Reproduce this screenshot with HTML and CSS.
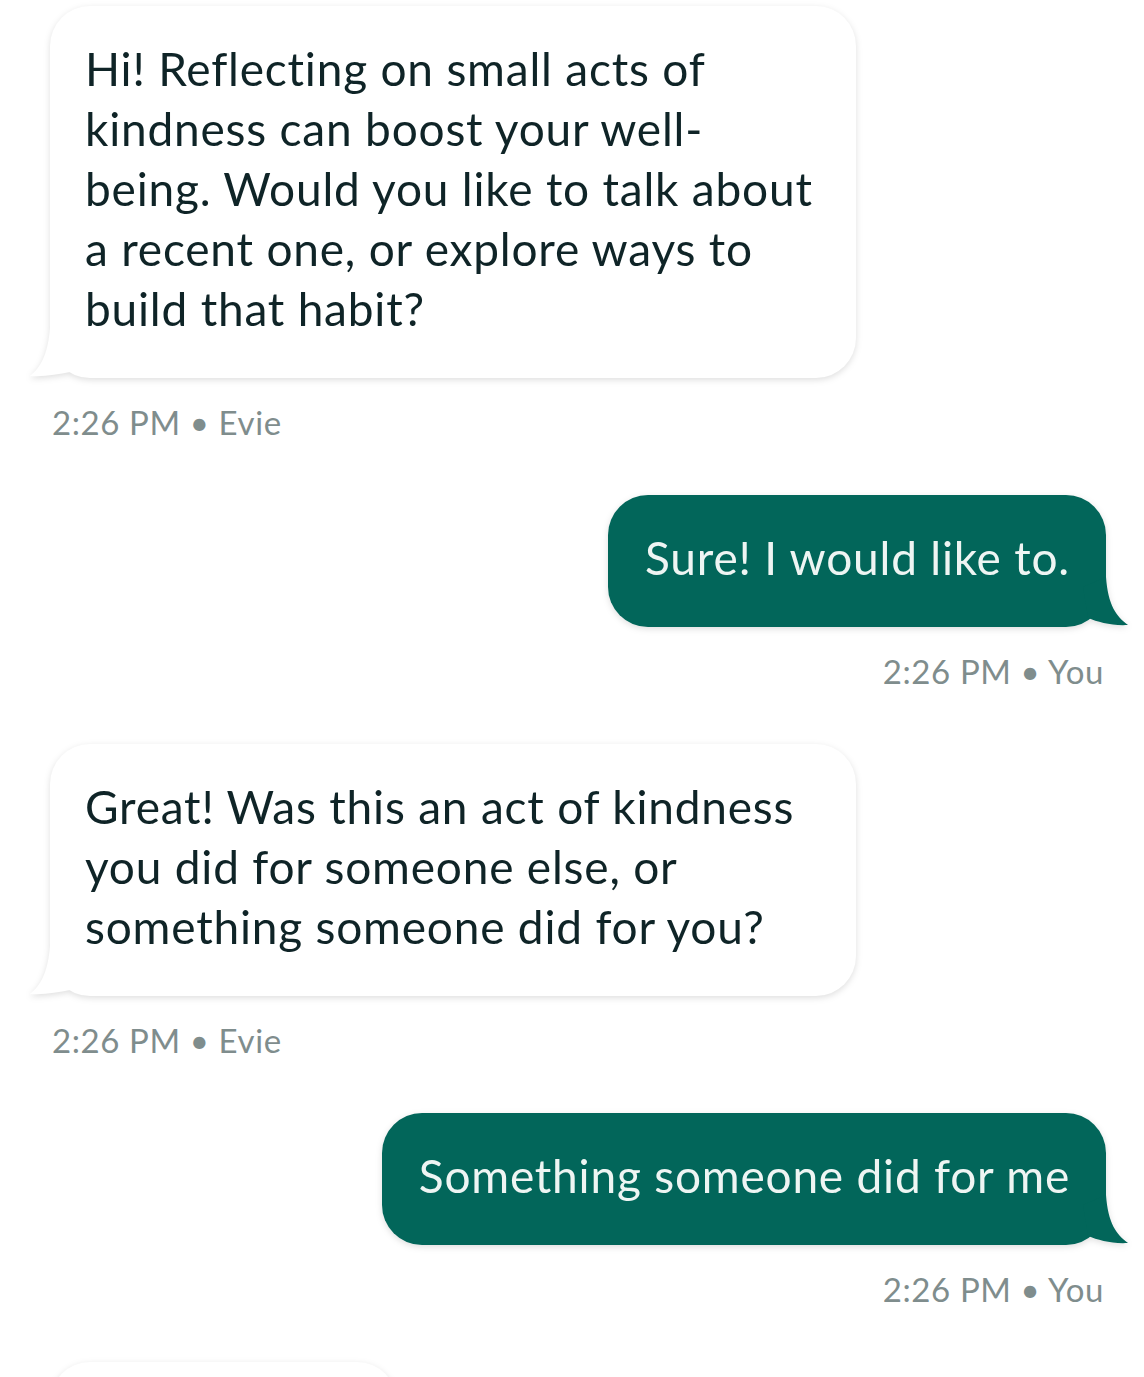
FILE: index.html
```html
<!DOCTYPE html>
<html lang="en">
<head>
    <meta charset="UTF-8">
    <meta name="viewport" content="width=device-width, initial-scale=1.0">
    <title>Chat with Evie</title>
    <link rel="stylesheet" href="styles.css">
</head>
<body>
    <div class="chat">
        <div class="message bot">
            <div class="bubble">
                Hi! Reflecting on small acts of<br>kindness can boost your well-<br>being. Would you like to talk about<br>a recent one, or explore ways to<br>build that habit?
                <svg class="tail" width="60" height="50" viewBox="0 0 60 50"><path d="M20 0 C18 27 10 40 0 48 C15 49 28 46 40 44 L45 10 Z"/></svg>
            </div>
            <div class="meta">2:26 PM • Evie</div>
        </div>

        <div class="message user">
            <div class="bubble">
                Sure! I would like to.
                <svg class="tail" width="60" height="50" viewBox="0 0 60 50"><path d="M38 0 C40 28 48 39 60 48 C44 49 30 45 20 41 L15 10 Z"/></svg>
            </div>
            <div class="meta">2:26 PM • You</div>
        </div>

        <div class="message bot">
            <div class="bubble">
                Great! Was this an act of kindness<br>you did for someone else, or<br>something someone did for you?
                <svg class="tail" width="60" height="50" viewBox="0 0 60 50"><path d="M20 0 C18 27 10 40 0 48 C15 49 28 46 40 44 L45 10 Z"/></svg>
            </div>
            <div class="meta">2:26 PM • Evie</div>
        </div>

        <div class="message user">
            <div class="bubble">
                Something someone did for me
                <svg class="tail" width="60" height="50" viewBox="0 0 60 50"><path d="M38 0 C40 28 48 39 60 48 C44 49 30 45 20 41 L15 10 Z"/></svg>
            </div>
            <div class="meta">2:26 PM • You</div>
        </div>

        <div class="message bot">
            <div class="bubble next"></div>
        </div>
    </div>
</body>
</html>
```

FILE: styles.css
```css
html, body {
    margin: 0;
    height: 100%;
    overflow: hidden;
}
body {
    font-family: Lato, "Open Sans", sans-serif;
    font-variant-ligatures: none;
    background-color: #ffffff;
    color: #0f2427;
}
.chat {
    display: flex;
    flex-direction: column;
    gap: 53px;
    padding: 6px 38px 0 50px;
}
.message {
    display: flex;
    flex-direction: column;
}
.message.bot {
    align-items: flex-start;
}
.message.user {
    align-items: flex-end;
}
.bubble {
    position: relative;
    font-size: 46px;
    line-height: 60px;
    letter-spacing: 0.8px;
    padding: 33px 36px 39px 35px;
    border-radius: 40px;
    white-space: nowrap;
    filter: drop-shadow(0px 2px 3px rgba(0, 0, 0, 0.13));
}
.bot .bubble {
    width: 735px;
    background-color: #ffffff;
}
.user .bubble {
    background-color: #02665a;
    color: #eef5f3;
    padding-left: 37px;
}
.bubble.next {
    width: 347px;
    height: 80px;
    padding: 0;
}
.tail {
    position: absolute;
    bottom: 0;
}
.bot .tail {
    left: -20px;
    fill: #ffffff;
}
.user .tail {
    right: -22px;
    fill: #02665a;
}
.meta {
    margin-top: 24px;
    font-size: 33px;
    line-height: 40px;
    letter-spacing: 0.6px;
    color: #7f8d8d;
}
.user .meta {
    margin-right: 2px;
}
.bot .meta {
    margin-left: 2px;
}
```
